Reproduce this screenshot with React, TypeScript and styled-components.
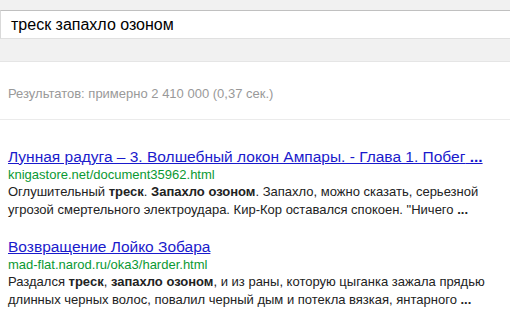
import styled, { createGlobalStyle } from "styled-components";

const GlobalStyle = createGlobalStyle`
  body {
    margin: 0;
    background: #fff;
    font-family: "Liberation Sans", Arial, sans-serif;
  }
`;

type Result = {
  title: string;
  url: string;
  cut?: boolean;
  snippet: React.ReactNode;
};

const results: Result[] = [
  {
    title: "Лунная радуга – 3. Волшебный локон Ампары. - Глава 1. Побег",
    url: "knigastore.net/document35962.html",
    cut: true,
    snippet: (
      <>
        Оглушительный <b>треск</b>. <b>Запахло озоном</b>. Запахло, можно сказать, серьезной
        угрозой смертельного электроудара. Кир-Кор оставался спокоен. "Ничего <b>...</b>
      </>
    ),
  },
  {
    title: "Возвращение Лойко Зобара",
    url: "mad-flat.narod.ru/oka3/harder.html",
    snippet: (
      <>
        Раздался <b>треск</b>, <b>запахло озоном</b>, и из раны, которую цыганка зажала прядью
        длинных черных волос, повалил черный дым и потекла вязкая, янтарного <b>...</b>
      </>
    ),
  },
];

function App() {
  return (
    <>
      <GlobalStyle />
      <Header>
        <SearchBox>треск запахло озоном</SearchBox>
      </Header>
      <Stats>Результатов: примерно 2 410 000 (0,37 сек.)</Stats>
      <Divider />
      <ResultList>
        {results.map((r) => (
          <ResultItem key={r.url}>
            <Title href="#">
              {r.title}
              {r.cut && <b> ...</b>}
            </Title>
            <Url>{r.url}</Url>
            <Snippet>{r.snippet}</Snippet>
          </ResultItem>
        ))}
      </ResultList>
    </>
  );
}

const Header = styled.div`
  background: #f1f1f1;
  padding: 10px 0 22px;
  border-bottom: 1px solid #e5e5e5;
`;

const SearchBox = styled.div`
  height: 27px;
  line-height: 28px;
  background: #fff;
  border-top: 1px solid #c0c0c0;
  border-bottom: 1px solid #e0e0e0;
  border-left: 1px solid #d9d9d9;
  padding-left: 10px;
  font-size: 16px;
  color: #000;
`;

const Stats = styled.div`
  margin-top: 24px;
  padding-left: 8px;
  font-size: 13px;
  line-height: 16px;
  color: #999;
`;

const Divider = styled.div`
  margin-top: 17px;
  height: 1px;
  background: #ebebeb;
`;

const ResultList = styled.div`
  padding: 28px 8px 0;
`;

const ResultItem = styled.div`
  margin-bottom: 19px;
  white-space: nowrap;
`;

const Title = styled.a`
  display: block;
  font-size: 15.5px;
  line-height: 18px;
  color: #1a1acc;
  text-decoration: underline;
`;

const Url = styled.div`
  font-size: 13px;
  line-height: 17px;
  color: #0a9933;
`;

const Snippet = styled.div`
  font-size: 13px;
  line-height: 18px;
  color: #222;
  white-space: normal;
  width: 480px;
`;

export default App;
